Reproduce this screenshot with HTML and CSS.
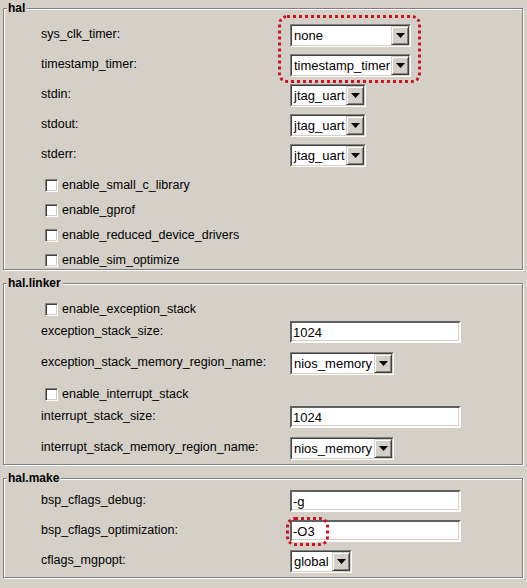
FILE: index.html
```html
<!DOCTYPE html>
<html>
<head>
<meta charset="utf-8">
<link rel="stylesheet" href="styles.css">
</head>
<body>
<div class="page">
  <div class="group g-hal">
    <div class="legend">hal</div>
    <div class="row"><span class="lbl">sys_clk_timer:</span><div class="combo w121"><div class="combo-in"><span class="val">none</span><span class="btn"><svg width="9" height="5" viewBox="0 0 9 5"><polygon points="0,0 9,0 4.5,5" fill="#000"/></svg></span></div></div></div>
    <div class="row"><span class="lbl">timestamp_timer:</span><div class="combo w121"><div class="combo-in"><span class="val">timestamp_timer</span><span class="btn"><svg width="9" height="5" viewBox="0 0 9 5"><polygon points="0,0 9,0 4.5,5" fill="#000"/></svg></span></div></div></div>
    <div class="row"><span class="lbl">stdin:</span><div class="combo w74"><div class="combo-in"><span class="val">jtag_uart</span><span class="btn"><svg width="9" height="5" viewBox="0 0 9 5"><polygon points="0,0 9,0 4.5,5" fill="#000"/></svg></span></div></div></div>
    <div class="row"><span class="lbl">stdout:</span><div class="combo w74"><div class="combo-in"><span class="val">jtag_uart</span><span class="btn"><svg width="9" height="5" viewBox="0 0 9 5"><polygon points="0,0 9,0 4.5,5" fill="#000"/></svg></span></div></div></div>
    <div class="row"><span class="lbl">stderr:</span><div class="combo w74"><div class="combo-in"><span class="val">jtag_uart</span><span class="btn"><svg width="9" height="5" viewBox="0 0 9 5"><polygon points="0,0 9,0 4.5,5" fill="#000"/></svg></span></div></div></div>
    <div class="checks">
      <div class="check"><span class="box"></span><span class="clbl">enable_small_c_library</span></div>
      <div class="check"><span class="box"></span><span class="clbl">enable_gprof</span></div>
      <div class="check"><span class="box"></span><span class="clbl">enable_reduced_device_drivers</span></div>
      <div class="check"><span class="box"></span><span class="clbl">enable_sim_optimize</span></div>
    </div>
  </div>

  <div class="group g-linker">
    <div class="legend">hal.linker</div>
    <div class="check"><span class="box"></span><span class="clbl">enable_exception_stack</span></div>
    <div class="row"><span class="lbl">exception_stack_size:</span><div class="text"><span class="val">1024</span></div></div>
    <div class="row row-c"><span class="lbl">exception_stack_memory_region_name:</span><div class="combo w103"><div class="combo-in"><span class="val">nios_memory</span><span class="btn"><svg width="9" height="5" viewBox="0 0 9 5"><polygon points="0,0 9,0 4.5,5" fill="#000"/></svg></span></div></div></div>
    <div class="check check-mid"><span class="box"></span><span class="clbl">enable_interrupt_stack</span></div>
    <div class="row"><span class="lbl">interrupt_stack_size:</span><div class="text"><span class="val">1024</span></div></div>
    <div class="row row-c"><span class="lbl">interrupt_stack_memory_region_name:</span><div class="combo w103"><div class="combo-in"><span class="val">nios_memory</span><span class="btn"><svg width="9" height="5" viewBox="0 0 9 5"><polygon points="0,0 9,0 4.5,5" fill="#000"/></svg></span></div></div></div>
  </div>

  <div class="group g-make">
    <div class="legend">hal.make</div>
    <div class="row"><span class="lbl">bsp_cflags_debug:</span><div class="text"><span class="val">-g</span></div></div>
    <div class="row"><span class="lbl">bsp_cflags_optimization:</span><div class="text"><span class="val">-O3</span></div></div>
    <div class="row"><span class="lbl">cflags_mgpopt:</span><div class="combo w62"><div class="combo-in"><span class="val">global</span><span class="btn"><svg width="9" height="5" viewBox="0 0 9 5"><polygon points="0,0 9,0 4.5,5" fill="#000"/></svg></span></div></div></div>
  </div>

  <div class="mark mark1"></div>
  <div class="mark mark2"></div>
</div>
</body>
</html>
```

FILE: styles.css
```css
html, body {
  margin: 0;
  padding: 0;
  background: #d4d0c8;
}
body {
  font-family: "Liberation Sans", Arial, sans-serif;
  color: #000;
  width: 527px;
  height: 588px;
  overflow: hidden;
}
.page {
  position: relative;
  padding-top: 8px;
  height: 580px;
}
.group {
  position: relative;
  margin: 0 4px 0 3px;
  border: 1px solid #808080;
  box-shadow: inset 1px 1px 0 #fff, 1px 1px 0 #fff;
  padding-left: 37px;
  display: flex;
  flex-direction: column;
}
.group + .group {
  margin-top: 13px;
}
.g-hal { padding-top: 11px; padding-bottom: 1px; }
.g-linker { padding-top: 17px; padding-bottom: 0; }
.g-make { padding-top: 7px; padding-bottom: 1px; }

.legend {
  position: absolute;
  top: -8px;
  left: 3px;
  padding: 0 2px 0 1px;
  background: #d4d0c8;
  font-size: 12px;
  font-weight: bold;
  line-height: 14px;
}
.row {
  display: flex;
  align-items: center;
  height: 30px;
}
.row-c { height: 32px; }
.lbl {
  width: 249px;
  font-size: 12.5px;
  line-height: 14px;
  padding-bottom: 3px;
  white-space: nowrap;
}
.val {
  font-size: 13px;
  line-height: 15px;
  white-space: nowrap;
  overflow: hidden;
}
.combo {
  box-sizing: border-box;
  height: 23px;
  border: 1px solid;
  border-color: #808080 #fff #fff #808080;
  background: #fff;
  display: flex;
}
.combo-in {
  flex: 1;
  display: flex;
  align-items: stretch;
  border: 1px solid;
  border-color: #404040 #d4d0c8 #d4d0c8 #404040;
  min-width: 0;
}
.combo-in .val {
  flex: 1;
  padding-left: 2px;
  align-self: center;
}
.btn {
  width: 18px;
  flex: none;
  box-sizing: border-box;
  background: #d4d0c8;
  border: 1px solid;
  border-color: #d4d0c8 #404040 #404040 #d4d0c8;
  box-shadow: inset 1px 1px 0 #fff, inset -1px -1px 0 #808080;
  display: flex;
  align-items: center;
  justify-content: center;
}
.btn svg { display: block; margin-top: 1px; }
.w121 { width: 121px; }
.w74 { width: 76px; }
.w103 { width: 104px; }
.w62 { width: 62px; }

.text {
  box-sizing: border-box;
  width: 171px;
  height: 22px;
  background: #fff;
  border: 2px solid;
  border-color: #606060 #fff #fff #606060;
  box-shadow: inset -1px -1px 0 #d4d0c8;
  display: flex;
  align-items: center;
  padding-left: 1px;
}
.checks {
  display: flex;
  flex-direction: column;
  gap: 9px;
  padding-top: 7px;
}
.check {
  display: flex;
  align-items: center;
  height: 16px;
  padding-left: 4px;
}
.check-mid { margin-top: 7px; }
.box {
  box-sizing: border-box;
  width: 13px;
  height: 13px;
  background: #fff;
  border: 1px solid;
  border-color: #808080 #fff #fff #808080;
  box-shadow: inset 1px 1px 0 #404040, inset -1px -1px 0 #d4d0c8;
  margin-right: 4px;
  flex: none;
}
.clbl {
  font-size: 12.5px;
  line-height: 14px;
  white-space: nowrap;
}
.mark {
  position: absolute;
  box-sizing: border-box;
  border: 3px dotted #cc1020;
  border-radius: 9px;
}
.mark1 { left: 278px; top: 15px; width: 143px; height: 68px; }
.mark2 { left: 286px; top: 517px; width: 43px; height: 29px; }
```
